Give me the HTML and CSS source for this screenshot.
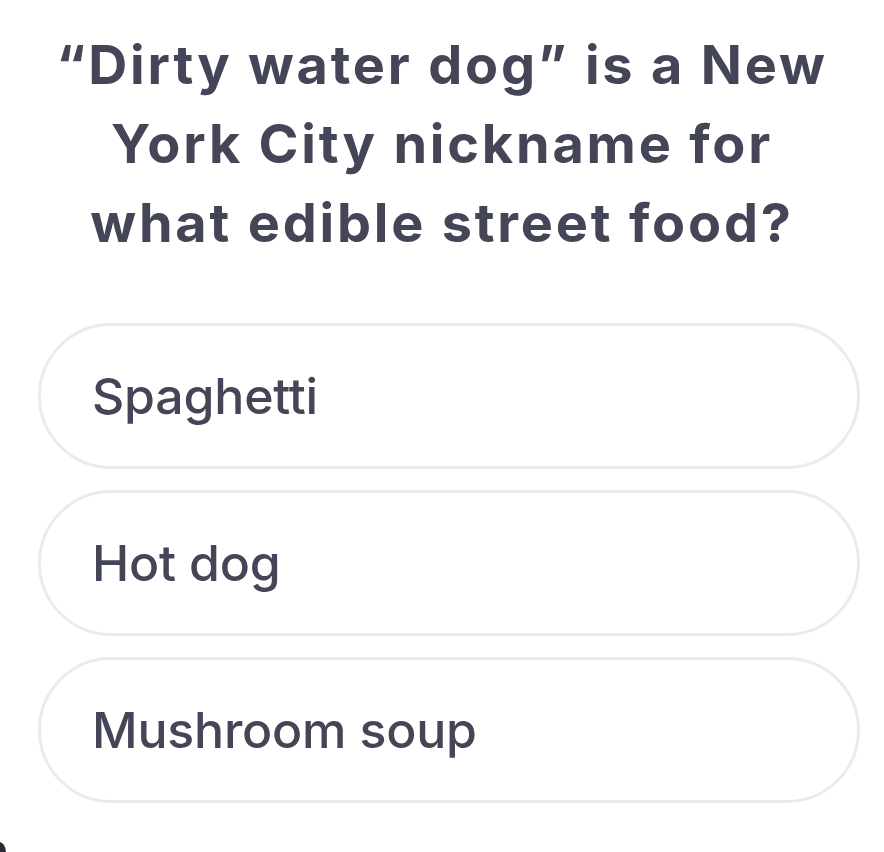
FILE: index.html
```html
<!DOCTYPE html>
<html lang="en">
<head>
<meta charset="utf-8">
<title>Trivia</title>
<link rel="stylesheet" href="styles.css">
</head>
<body>
<main class="quiz">
  <h1 class="question">“Dirty water dog” is a New York City nickname for what edible street food?</h1>
  <div class="options">
    <button class="option">Spaghetti</button>
    <button class="option">Hot dog</button>
    <button class="option">Mushroom soup</button>
  </div>
</main>
<div class="corner"></div>
</body>
</html>
```
FILE: styles.css
```css
html, body {
  margin: 0;
  padding: 0;
  background: #ffffff;
}
body {
  width: 884px;
  height: 852px;
  overflow: hidden;
  position: relative;
  font-family: Inter, "Noto Sans", sans-serif;
  color: #444557;
}
.quiz {
  display: flex;
  flex-direction: column;
  padding-top: 25px;
}
.question {
  margin: 0 auto;
  width: 790px;
  text-align: center;
  font-size: 54px;
  line-height: 79px;
  font-weight: 700;
  letter-spacing: 2.8px;
}
.options {
  display: flex;
  flex-direction: column;
  gap: 21px;
  margin: 61px 24px 0 38px;
}
.option {
  box-sizing: border-box;
  height: 146px;
  border: 3px solid #ebebeb;
  border-radius: 73px;
  background: #ffffff;
  display: flex;
  align-items: center;
  padding: 0 0 0 51px;
  font-family: inherit;
  color: inherit;
  font-size: 50px;
  font-weight: 500;
  letter-spacing: -0.2px;
  text-align: left;
}
.corner {
  position: absolute;
  left: -8px;
  top: 842px;
  width: 14px;
  height: 20px;
  border-radius: 50%;
  background: #2a2b3a;
}
```
